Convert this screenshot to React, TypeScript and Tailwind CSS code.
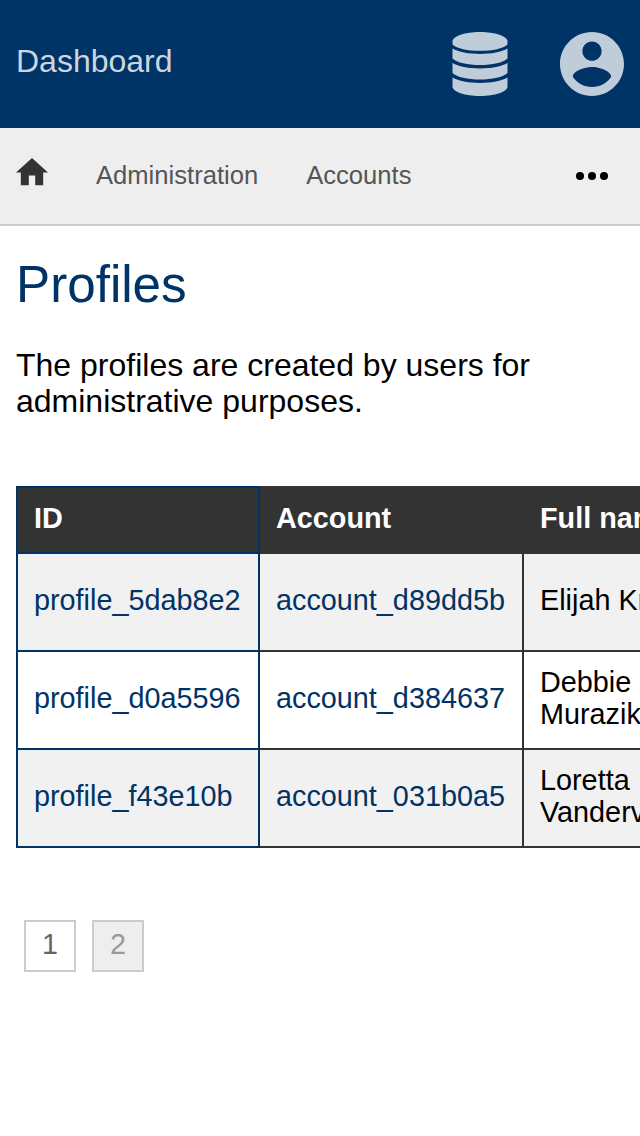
import type { ReactNode } from "react";

interface Profile {
  id: string;
  account: string;
  name: string[];
}

const profiles: Profile[] = [
  { id: "profile_5dab8e2", account: "account_d89dd5b", name: ["Elijah Kris"] },
  { id: "profile_d0a5596", account: "account_d384637", name: ["Debbie", "Murazik"] },
  { id: "profile_f43e10b", account: "account_031b0a5", name: ["Loretta", "Vandervort"] },
];

function DatabaseIcon() {
  return (
    <svg viewBox="0 0 56 64" className="h-16 w-14" fill="currentColor" aria-hidden="true">
      <path d="M28 0C43.500 0 55.500 4.200 55.500 9.500V12.500C51 16.600 40.500 18.800 28 18.800S5 16.600 .5 12.500V9.500C.5 4.200 12.500 0 28 0Z" />
      <path d="M.5 16.600C6.500 20.200 16.500 22 28 22s21.500-1.800 27.500-5.400v9.900C51 30.700 40.500 33 28 33S5 30.700 .5 26.500Z" />
      <path d="M.5 31C6.500 34.600 16.500 36.400 28 36.400s21.500-1.800 27.500-5.400v9.900C51 45.100 40.500 47.400 28 47.400S5 45.100 .5 40.900Z" />
      <path d="M.5 45.500C6.500 49.100 16.500 50.900 28 50.900s21.500-1.800 27.500-5.400v9C55.500 59.800 43.500 64 28 64S.5 59.800 .5 54.500Z" />
    </svg>
  );
}

function AccountIcon() {
  return (
    <svg viewBox="2 2 20 20" className="size-16" fill="currentColor" aria-hidden="true">
      <path d="M12 2C6.480 2 2 6.480 2 12s4.480 10 10 10 10-4.480 10-10S17.520 2 12 2zm0 3c1.660 0 3 1.340 3 3s-1.340 3-3 3-3-1.340-3-3 1.340-3 3-3zm0 14.200c-2.500 0-4.710-1.280-6-3.220.03-1.990 4-3.080 6-3.080 1.990 0 5.970 1.090 6 3.080-1.290 1.940-3.500 3.220-6 3.220z" />
    </svg>
  );
}

function HomeIcon() {
  return (
    <svg viewBox="2 3 20 17" className="h-[27.2px] w-8" fill="currentColor" aria-hidden="true">
      <path d="M10 20v-6h4v6h5v-8h3L12 3 2 12h3v8z" />
    </svg>
  );
}

function MoreIcon() {
  return (
    <svg viewBox="0 0 32 8" className="h-2 w-8" fill="currentColor" aria-hidden="true">
      <circle cx="4" cy="4" r="4" />
      <circle cx="16" cy="4" r="4" />
      <circle cx="28" cy="4" r="4" />
    </svg>
  );
}

function HeaderCell({ children, first }: { children: ReactNode; first?: boolean }) {
  return (
    <th
      className={`border-2 px-4 pt-[14px] pb-[18px] text-left align-top font-bold whitespace-nowrap ${
        first ? "border-[#003366]" : "border-[#333333]"
      }`}
    >
      {children}
    </th>
  );
}

export default function App() {
  return (
    <div className="h-[1136px] w-[640px] overflow-hidden bg-white font-['Liberation_Sans',Arial,sans-serif] text-black">
      <header className="flex h-32 items-center justify-between bg-[#003366] px-4 text-[#bfccd9]">
        <a className="pb-[6px] text-[32px] leading-9 text-[#ccd6e0]">Dashboard</a>
        <div className="flex items-center gap-[52px]">
          <DatabaseIcon />
          <AccountIcon />
        </div>
      </header>

      <nav className="flex h-[98px] items-start border-b-2 border-[#cccccc] bg-[#eeeeee] pr-8 pl-4 text-[25.6px] leading-[30px] text-[#555555]">
        <a className="mt-[30.4px] text-[#333333]">
          <HomeIcon />
        </a>
        <a className="mt-8 ml-12">Administration</a>
        <a className="mt-8 ml-12">Accounts</a>
        <button className="mt-11 ml-auto text-black" aria-label="More">
          <MoreIcon />
        </button>
      </nav>

      <main className="px-4">
        <h1 className="pt-[30px] text-[51.2px] leading-[58px] text-[#003366]">Profiles</h1>
        <p className="mt-[33px] text-[32px] leading-9">
          The profiles are created by users for
          <br />
          administrative purposes.
        </p>

        <div className="-mr-4 mt-[67px] overflow-hidden">
          <table className="w-[728px] table-fixed border-collapse text-[28.8px] leading-8">
            <colgroup>
              <col className="w-[242px]" />
              <col className="w-[264px]" />
              <col className="w-[220px]" />
            </colgroup>
            <thead>
              <tr className="h-[66px] bg-[#333333] text-white">
                <HeaderCell first>ID</HeaderCell>
                <HeaderCell>Account</HeaderCell>
                <HeaderCell>Full name</HeaderCell>
              </tr>
            </thead>
            <tbody>
              {profiles.map((profile) => (
                <tr key={profile.id} className="h-[98px] odd:bg-[#f1f1f1]">
                  <td className="border-2 border-[#003366] px-4 pb-1 text-[#003366]">{profile.id}</td>
                  <td className="border-2 border-[#333333] px-4 pb-1 text-[#003366]">{profile.account}</td>
                  <td className="border-2 border-[#333333] px-4 pb-1">
                    {profile.name.map((part) => (
                      <span key={part} className="block">
                        {part}
                      </span>
                    ))}
                  </td>
                </tr>
              ))}
            </tbody>
          </table>
        </div>

        <div className="mt-[72px] ml-2 flex gap-4 text-[28.8px] leading-8">
          <a className="flex size-[52px] justify-center border-2 border-[#cccccc] pt-[6px] text-[#666666]">1</a>
          <a className="flex size-[52px] justify-center border-2 border-[#cccccc] bg-[#eeeeee] pt-[6px] text-[#999999]">2</a>
        </div>
      </main>
    </div>
  );
}
